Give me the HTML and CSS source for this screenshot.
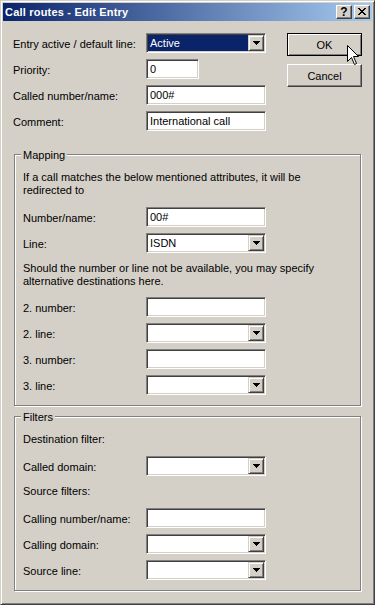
FILE: index.html
```html
<!DOCTYPE html>
<html lang="en">

<head>
  <meta charset="UTF-8">
  <meta name="viewport" content="width=device-width, initial-scale=1.0">
  <title>Call routes - Edit Entry</title>
  <link rel="stylesheet" href="styles.css">
</head>

<body>

  <div class="window">
    <div class="titlebar">
      <span class="title">Call routes - Edit Entry</span>
      <div class="title-btns">
        <span class="tbtn help">?</span>
        <span class="tbtn close">
          <svg width="8" height="7" viewBox="0 0 8 7" shape-rendering="crispEdges">
            <path d="M0 0h2v1H0z M6 0h2v1H6z M1 1h2v1H1z M5 1h2v1H5z M2 2h4v1H2z M3 3h2v1H3z M2 4h4v1H2z M1 5h2v1H1z M5 5h2v1H5z M0 6h2v1H0z M6 6h2v1H6z" fill="#000"/>
          </svg>
        </span>
      </div>
    </div>

    <div class="content">
      <div class="top">
        <div class="form">
          <div class="row">
            <label>Entry active / default line:</label>
            <div class="combo">
              <span class="value selected">Active</span>
              <span class="drop"><svg width="7" height="4" viewBox="0 0 7 4" shape-rendering="crispEdges"><path d="M0 0h7v1H0z M1 1h5v1H1z M2 2h3v1H2z M3 3h1v1H3z" fill="#000"/></svg></span>
            </div>
          </div>
          <div class="row">
            <label>Priority:</label>
            <input class="edit short" type="text" value="0">
          </div>
          <div class="row">
            <label>Called number/name:</label>
            <input class="edit" type="text" value="000#">
          </div>
          <div class="row">
            <label>Comment:</label>
            <input class="edit" type="text" value="International call">
          </div>
        </div>

        <div class="actions">
          <button class="btn default">OK</button>
          <button class="btn">Cancel</button>
        </div>
      </div>

      <div class="group">
        <span class="legend">Mapping</span>
        <p class="note first">If a call matches the below mentioned attributes, it will be<br>redirected to</p>
        <div class="row">
          <label>Number/name:</label>
          <input class="edit" type="text" value="00#">
        </div>
        <div class="row">
          <label>Line:</label>
          <div class="combo">
            <span class="value">ISDN</span>
            <span class="drop"><svg width="7" height="4" viewBox="0 0 7 4" shape-rendering="crispEdges"><path d="M0 0h7v1H0z M1 1h5v1H1z M2 2h3v1H2z M3 3h1v1H3z" fill="#000"/></svg></span>
          </div>
        </div>
        <p class="note">Should the number or line not be available, you may specify<br>alternative destinations here.</p>
        <div class="row">
          <label>2. number:</label>
          <input class="edit" type="text" value="">
        </div>
        <div class="row">
          <label>2. line:</label>
          <div class="combo">
            <span class="value"></span>
            <span class="drop"><svg width="7" height="4" viewBox="0 0 7 4" shape-rendering="crispEdges"><path d="M0 0h7v1H0z M1 1h5v1H1z M2 2h3v1H2z M3 3h1v1H3z" fill="#000"/></svg></span>
          </div>
        </div>
        <div class="row">
          <label>3. number:</label>
          <input class="edit" type="text" value="">
        </div>
        <div class="row">
          <label>3. line:</label>
          <div class="combo">
            <span class="value"></span>
            <span class="drop"><svg width="7" height="4" viewBox="0 0 7 4" shape-rendering="crispEdges"><path d="M0 0h7v1H0z M1 1h5v1H1z M2 2h3v1H2z M3 3h1v1H3z" fill="#000"/></svg></span>
          </div>
        </div>
      </div>

      <div class="group">
        <span class="legend">Filters</span>
        <p class="note first">Destination filter:</p>
        <div class="row">
          <label>Called domain:</label>
          <div class="combo">
            <span class="value"></span>
            <span class="drop"><svg width="7" height="4" viewBox="0 0 7 4" shape-rendering="crispEdges"><path d="M0 0h7v1H0z M1 1h5v1H1z M2 2h3v1H2z M3 3h1v1H3z" fill="#000"/></svg></span>
          </div>
        </div>
        <p class="note last">Source filters:</p>
        <div class="row">
          <label>Calling number/name:</label>
          <input class="edit" type="text" value="">
        </div>
        <div class="row">
          <label>Calling domain:</label>
          <div class="combo">
            <span class="value"></span>
            <span class="drop"><svg width="7" height="4" viewBox="0 0 7 4" shape-rendering="crispEdges"><path d="M0 0h7v1H0z M1 1h5v1H1z M2 2h3v1H2z M3 3h1v1H3z" fill="#000"/></svg></span>
          </div>
        </div>
        <div class="row">
          <label>Source line:</label>
          <div class="combo">
            <span class="value"></span>
            <span class="drop"><svg width="7" height="4" viewBox="0 0 7 4" shape-rendering="crispEdges"><path d="M0 0h7v1H0z M1 1h5v1H1z M2 2h3v1H2z M3 3h1v1H3z" fill="#000"/></svg></span>
          </div>
        </div>
      </div>
    </div>

    <!-- mouse pointer resting on the OK button -->
    <svg class="pointer" width="13" height="21" viewBox="0 0 13 21">
      <path d="M0.5 0.5 L0.5 16.5 L4.5 12.5 L7.5 19.5 L9.5 18.5 L6.5 11.5 L11.5 11.5 Z" fill="#fff" stroke="#000" stroke-width="1" stroke-linejoin="miter"/>
    </svg>
  </div>

</body>

</html>
```

FILE: styles.css
```css
body {
  margin: 0;
  font-family: "Liberation Sans", Arial, sans-serif;
  font-size: 11px;
  color: #000;
}

.window {
  position: relative;
  box-sizing: border-box;
  width: 375px;
  height: 605px;
  padding: 2px;
  background: #d4d0c8;
  border: 1px solid;
  border-color: #d4d0c8 #404040 #404040 #d4d0c8;
  box-shadow: inset 1px 1px #fff, inset -1px -1px #808080;
}

.titlebar {
  height: 18px;
  display: flex;
  align-items: center;
  justify-content: space-between;
  padding: 0 2px;
  background: linear-gradient(to right, #0a246a, #a6caf0);
}

.title {
  color: #fff;
  font-weight: bold;
  font-size: 11px;
  letter-spacing: 0.2px;
  line-height: 18px;
}

.title-btns {
  display: flex;
  gap: 2px;
}

.tbtn {
  box-sizing: border-box;
  width: 16px;
  height: 14px;
  display: flex;
  align-items: center;
  justify-content: center;
  background: #d4d0c8;
  border: 1px solid;
  border-color: #fff #404040 #404040 #fff;
  box-shadow: inset -1px -1px #808080;
}

.tbtn.help {
  font-weight: bold;
  font-size: 12px;
  line-height: 12px;
}

.tbtn.close svg {
  margin-top: -1px;
}

.content {
  padding: 12px 10px 0;
}

.top {
  display: flex;
  margin-bottom: 23px;
}

.form {
  flex: 1;
  display: flex;
  flex-direction: column;
  gap: 6px;
}

.row {
  display: grid;
  grid-template-columns: 133px auto;
  align-items: center;
  height: 20px;
}

.group .row {
  grid-template-columns: 123px auto;
}

.row label {
  line-height: 13px;
  padding-top: 3px;
}

.edit {
  box-sizing: border-box;
  width: 120px;
  height: 20px;
  margin: 0;
  padding: 0 3px;
  font-family: inherit;
  font-size: 11px;
  color: #000;
  background: #fff;
  border: 1px solid;
  border-color: #808080 #fff #fff #808080;
  box-shadow: inset 1px 1px #404040, inset -1px -1px #d4d0c8;
  outline: none;
}

.edit.short {
  width: 53px;
}

.combo {
  box-sizing: border-box;
  width: 120px;
  height: 20px;
  display: flex;
  padding: 1px;
  background: #fff;
  border: 1px solid;
  border-color: #808080 #fff #fff #808080;
  box-shadow: inset 1px 1px #404040, inset -1px -1px #d4d0c8;
}

.combo .value {
  flex: 1;
  padding-left: 2px;
  line-height: 16px;
}

.combo .value.selected {
  background: #0a246a;
  color: #fff;
}

.drop {
  box-sizing: border-box;
  width: 16px;
  height: 16px;
  display: flex;
  align-items: center;
  justify-content: center;
  background: #d4d0c8;
  border: 1px solid;
  border-color: #d4d0c8 #404040 #404040 #d4d0c8;
  box-shadow: inset 1px 1px #fff, inset -1px -1px #808080;
}

.actions {
  width: 75px;
  display: flex;
  flex-direction: column;
  gap: 8px;
}

.btn {
  box-sizing: border-box;
  width: 75px;
  height: 23px;
  margin: 0;
  padding: 0;
  font-family: inherit;
  font-size: 11px;
  color: #000;
  background: #d4d0c8;
  border: 1px solid;
  border-color: #fff #404040 #404040 #fff;
  box-shadow: inset -1px -1px #808080;
}

.btn.default {
  border-color: #000;
  box-shadow: inset 1px 1px #fff, inset -1px -1px #808080;
}

.group {
  position: relative;
  margin: 0 1px;
  padding: 16px 8px 10px;
  display: flex;
  flex-direction: column;
  gap: 6px;
  border: 1px solid #808080;
  box-shadow: inset 1px 1px #fff, 1px 1px #fff;
}

.group + .group {
  margin-top: 10px;
}

.legend {
  position: absolute;
  top: -6px;
  left: 6px;
  padding: 0 2px;
  line-height: 13px;
  background: #d4d0c8;
}

.note {
  margin: 3px 0;
  line-height: 13px;
}

.note.first {
  margin: 0 0 4px;
}

.note.last {
  margin: 3px 0 4px;
}

.pointer {
  position: absolute;
  left: 346px;
  top: 44px;
}
```
